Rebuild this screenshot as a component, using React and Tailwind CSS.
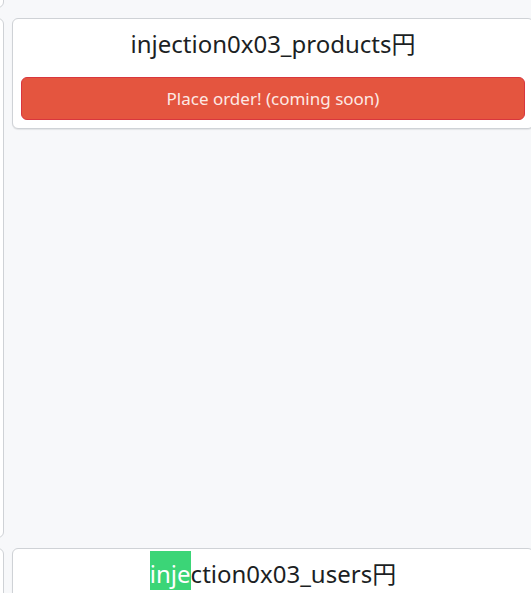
import React from "react";

const products = [
  { id: "products", title: "injection0x03_products円", button: true },
  { id: "users", title: "injection0x03_users円", highlight: 4 },
];

const Card = ({ item, filler }) => {
  if (filler) {
    return <div className="bg-white border border-[#cfd2d6] rounded-md"></div>;
  }
  return (
    <div className="bg-white border border-[#cfd2d6] rounded-md shadow-[0_1px_1px_rgba(0,0,0,0.08)] px-2 pt-2 pb-2">
      <h2 className="text-center text-[24px] leading-[34px] text-[#1c1f24] mb-[16px]">
        {item.highlight ? (
          <>
            <span className="bg-[#3bd577] text-white pt-[6px]">
              {item.title.slice(0, item.highlight)}
            </span>
            {item.title.slice(item.highlight)}
          </>
        ) : (
          item.title
        )}
      </h2>
      {item.button && (
        <button className="w-full h-[43px] rounded-md border border-[#d9363e] bg-[#e4553f] text-[#fde9e4] text-[17px]">
          Place order! (coming soon)
        </button>
      )}
    </div>
  );
};

const App = () => {
  return (
    <div
      className="w-[531px] h-[593px] overflow-hidden bg-[#f7f8fa]"
      style={{ fontFamily: '"Noto Sans", "Noto Sans CJK JP", sans-serif' }}>
      <div className="-ml-[518px] -mt-[92px] grid grid-cols-[522px_522px] gap-x-[8px] gap-y-[10px]">
        <div className="h-[100px] bg-white border border-[#cfd2d6] rounded-md"></div>
        <div className="h-[100px]"></div>
        <Card filler />
        <div className="h-[520px] flex flex-col">
          <Card item={products[0]} />
        </div>
        <div className="h-[120px] bg-white border border-[#cfd2d6] rounded-md"></div>
        <Card item={products[1]} />
      </div>
    </div>
  );
};

export default App;
